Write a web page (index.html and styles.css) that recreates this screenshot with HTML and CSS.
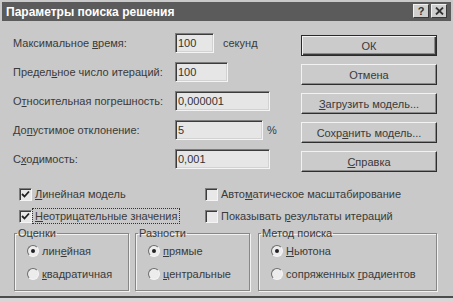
FILE: index.html
```html
<!DOCTYPE html>
<html lang="ru">
<head>
  <meta charset="UTF-8" />
  <meta name="viewport" content="width=device-width, initial-scale=1.0"/>
  <title>Параметры поиска решения</title>
  <link rel="stylesheet" href="styles.css">
</head>
<body>
<div class="dialog">
  <div class="titlebar">
    <span class="title">Параметры поиска решения</span>
    <div class="caption-btns">
      <span class="cap-btn help">?</span>
      <span class="cap-btn">
        <svg width="9" height="8" viewBox="0 0 9 8"><path d="M1 0.5 L8 7.5 M8 0.5 L1 7.5" stroke="#333" stroke-width="1.8"/></svg>
      </span>
    </div>
  </div>

  <div class="content">
    <div class="top">
      <div class="fields">
        <div class="row">
          <label class="lbl">Максимальное <u>в</u>ремя:</label>
          <input class="field w-time" type="text" value="100" />
          <span class="unit">секунд</span>
        </div>
        <div class="row">
          <label class="lbl">Предел<u>ь</u>ное число итераций:</label>
          <input class="field w-iter" type="text" value="100" />
        </div>
        <div class="row">
          <label class="lbl">О<u>т</u>носительная погрешность:</label>
          <input class="field w-wide" type="text" value="0,000001" />
        </div>
        <div class="row">
          <label class="lbl">До<u>п</u>устимое отклонение:</label>
          <input class="field w-tol" type="text" value="5" />
          <span class="unit pct">%</span>
        </div>
        <div class="row">
          <label class="lbl">С<u>х</u>одимость:</label>
          <input class="field w-wide" type="text" value="0,001" />
        </div>
      </div>

      <div class="buttons">
        <button class="btn default">ОК</button>
        <button class="btn">Отмена</button>
        <button class="btn"><u>З</u>агрузить модель...</button>
        <button class="btn">Сохр<u>а</u>нить модель...</button>
        <button class="btn"><u>С</u>правка</button>
      </div>
    </div>

    <div class="checks">
      <div class="check">
        <span class="box on"><svg width="9" height="9" viewBox="0 0 9 9"><path d="M1 4 L3.5 6.5 L8 1.5" fill="none" stroke="#222" stroke-width="1.8"/></svg></span>
        <span><u>Л</u>инейная модель</span>
      </div>
      <div class="check">
        <span class="box"></span>
        <span>Авто<u>м</u>атическое масштабирование</span>
      </div>
      <div class="check">
        <span class="box on"><svg width="9" height="9" viewBox="0 0 9 9"><path d="M1 4 L3.5 6.5 L8 1.5" fill="none" stroke="#222" stroke-width="1.8"/></svg></span>
        <span class="focused"><u>Н</u>еотрицательные значения</span>
      </div>
      <div class="check">
        <span class="box"></span>
        <span>Показывать <u>р</u>езультаты итераций</span>
      </div>
    </div>

    <div class="groups">
      <fieldset class="group g-est">
        <legend>Оценки</legend>
        <div class="radio"><span class="dot on"></span><span>лин<u>е</u>йная</span></div>
        <div class="radio"><span class="dot"></span><span><u>к</u>вадратичная</span></div>
      </fieldset>
      <fieldset class="group g-diff">
        <legend>Разности</legend>
        <div class="radio"><span class="dot on"></span><span><u>п</u>рямые</span></div>
        <div class="radio"><span class="dot"></span><span><u>ц</u>ентральные</span></div>
      </fieldset>
      <fieldset class="group g-method">
        <legend>Метод поиска</legend>
        <div class="radio"><span class="dot on"></span><span><u>Н</u>ьютона</span></div>
        <div class="radio"><span class="dot"></span><span>сопряженных <u>г</u>радиентов</span></div>
      </fieldset>
    </div>
  </div>
</div>
</body>
</html>
```

FILE: styles.css
```css
body {
  margin: 0;
  font-family: "Liberation Sans", Arial, sans-serif;
  font-size: 11px;
  color: #3a3a3a;
  background-color: #d6d6d6;
}

u {
  text-decoration-thickness: 1px;
  text-underline-offset: 1px;
}

.dialog {
  width: 449px;
  height: 294px;
  padding: 2px 2px 0;
  background-color: #c9c9c9;
  border-bottom: 2px solid #4c4c4c;
}

/* title bar */
.titlebar {
  height: 19px;
  background-color: #5b5b5b;
  display: flex;
  align-items: center;
  justify-content: space-between;
  padding: 0 4px 0 4px;
}

.title {
  color: #fff;
  font-weight: bold;
  font-size: 12px;
}

.caption-btns {
  display: flex;
  gap: 2px;
  margin-top: -2px;
}

.cap-btn {
  width: 14px;
  height: 12px;
  background-color: #cfcfcf;
  border: 1px solid;
  border-color: #f2f2f2 #3a3a3a #3a3a3a #f2f2f2;
  display: flex;
  align-items: center;
  justify-content: center;
  font-weight: bold;
  font-size: 11px;
  color: #333;
}

/* fields + buttons */
.content {
  padding-top: 12px;
}

.top {
  display: flex;
  padding: 0 14px 0 11px;
}

.fields {
  flex: 1;
  display: flex;
  flex-direction: column;
  gap: 9px;
}

.row {
  display: flex;
  align-items: center;
  height: 20px;
}

.lbl {
  width: 162px;
}

.field {
  height: 20px;
  box-sizing: border-box;
  padding: 0 2px;
  font-family: "Liberation Sans", Arial, sans-serif;
  font-size: 11px;
  color: #333;
  background-color: #e6e6e6;
  border: 1px solid;
  border-color: #7c7c7c #f4f4f4 #f4f4f4 #7c7c7c;
  box-shadow: inset 1px 1px 0 #3c3c3c, inset -1px -1px 0 #d2d2d2;
  outline: none;
}

.w-time { width: 39px; }
.w-iter { width: 53px; }
.w-wide { width: 95px; }
.w-tol { width: 88px; }

.unit {
  margin-left: 9px;
}

.unit.pct {
  margin-left: 4px;
}

.buttons {
  width: 136px;
  padding-top: 2px;
  display: flex;
  flex-direction: column;
  gap: 8px;
}

.btn {
  height: 21px;
  font-family: "Liberation Sans", Arial, sans-serif;
  font-size: 11px;
  color: #3a3a3a;
  background-color: #cbcbcb;
  border: 1px solid;
  border-color: #f2f2f2 #2e2e2e #2e2e2e #f2f2f2;
  box-shadow: inset -1px -1px 0 #8a8a8a;
  padding: 0;
}

.btn.default {
  border-color: #2a2a2a;
  box-shadow: inset 1px 1px 0 #f2f2f2, inset -1px -1px 0 #3a3a3a, inset -2px -2px 0 #8a8a8a;
}

/* check boxes */
.checks {
  display: grid;
  grid-template-columns: 186px 1fr;
  grid-auto-rows: 22px;
  padding-left: 17px;
  margin-top: 11px;
}

.check {
  display: flex;
  align-items: center;
  gap: 3px;
}

.box {
  width: 11px;
  height: 11px;
  background-color: #e8e8e8;
  border: 1px solid;
  border-color: #7c7c7c #f4f4f4 #f4f4f4 #7c7c7c;
  box-shadow: inset 1px 1px 0 #3c3c3c;
  display: flex;
  align-items: center;
  justify-content: center;
}

.focused {
  outline: 1px dotted #333;
  outline-offset: 1px;
  padding: 0 1px;
  margin-left: -1px;
}

/* group boxes */
.groups {
  display: flex;
  align-items: flex-start;
  gap: 6px;
  padding-left: 12px;
}

.group {
  margin: 0;
  padding: 0 0 5px;
  border: 1px solid #878787;
  box-shadow: inset 1px 1px 0 #f2f2f2, 1px 1px 0 #f2f2f2;
}

.g-est { width: 113px; }
.g-diff { width: 113px; }
.g-method { width: 177px; margin-left: 2px; }

legend {
  padding: 0 1px;
  margin-left: 2px;
  line-height: 12px;
}

.radio {
  display: flex;
  align-items: center;
  gap: 3px;
  height: 23px;
  padding-left: 12px;
}

.dot {
  width: 10px;
  height: 10px;
  border-radius: 50%;
  background-color: #ececec;
  border: 1px solid;
  border-color: #6c6c6c #f4f4f4 #f4f4f4 #6c6c6c;
  display: flex;
  align-items: center;
  justify-content: center;
}

.dot.on::after {
  content: "";
  width: 4px;
  height: 4px;
  border-radius: 50%;
  background-color: #222;
}
```
